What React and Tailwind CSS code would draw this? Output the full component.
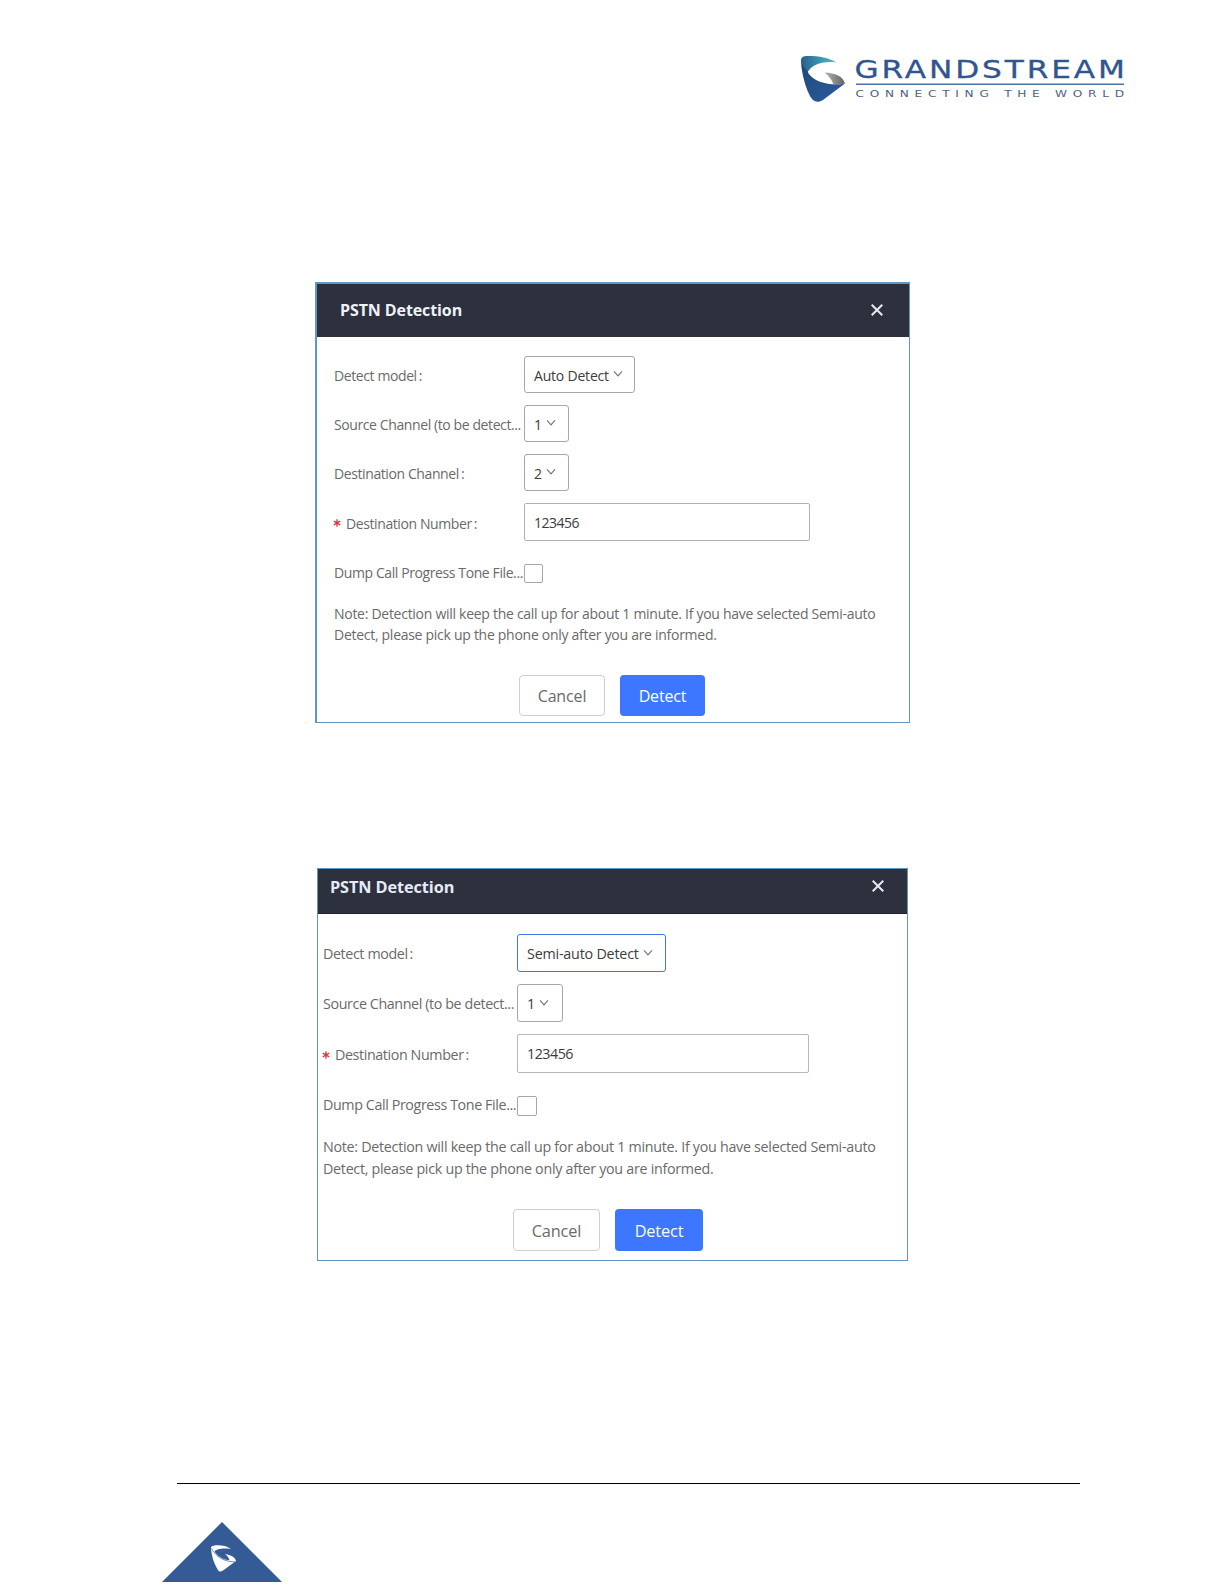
import clsx from 'clsx';

const Chevron = () => (
  <svg width="10" height="8" viewBox="0 0 10 8" fill="none" stroke="#777" strokeWidth="1.2" className="mb-px shrink-0">
    <path d="M1 1.4 L5 5.8 L9 1.4" />
  </svg>
);

const Close = () => (
  <svg width="12" height="12" viewBox="0 0 12 12" fill="none" stroke="#e6e9f2" strokeWidth="2">
    <path d="M0.7 0.7 L11.3 11.3 M11.3 0.7 L0.7 11.3" />
  </svg>
);

const Select = ({ value, className }) => (
  <button className={clsx('flex items-center rounded-[3px] border bg-white pl-[9px] tracking-[-0.2px] text-[#3c3c3c]', className)}>
    <span className="mt-px mr-1">{value}</span>
    <Chevron />
  </button>
);

const Row = ({ label, required, colon, className, labelClass, children }) => (
  <div className={clsx('flex items-center', className)}>
    <div className={clsx('flex shrink-0 items-center pt-[2px] tracking-[-0.4px] whitespace-nowrap text-[#6a6a6a]', labelClass)}>
      {required && (
        <svg width="8" height="8" viewBox="0 0 8 8" stroke="#d9363e" strokeWidth="1.3" className="mr-[5px] -ml-px">
          <path d="M4 0.3 V7.7 M0.8 2.1 L7.2 5.9 M7.2 2.1 L0.8 5.9" />
        </svg>
      )}
      <span>{label}</span>
      {colon && <span className="ml-[2px]">:</span>}
    </div>
    {children}
  </div>
);

const Note = ({ className }) => (
  <p className={clsx('whitespace-nowrap text-[#6a6a6a]', className)}>
    Note: Detection will keep the call up for about 1 minute. If you have selected Semi-auto
    <br />
    Detect, please pick up the phone only after you are informed.
  </p>
);

const AutoDialog = () => (
  <section className="mt-[180px] ml-[315px] h-[441px] w-[595px] border-t-2 border-r border-b border-l-2 border-[#6496c4] bg-white text-[14px]">
    <header className="flex h-[53px] items-center justify-between bg-[#2d313e] pr-[26px] pb-[2px] pl-[23px]">
      <h2 className="text-[16px] font-bold tracking-[-0.1px] text-[#eef0fa]">PSTN Detection</h2>
      <Close />
    </header>
    <div className="pt-[13px] pl-[17px]">
      <Row label="Detect model" colon className="h-[49px]" labelClass="w-[190px]">
        <Select value="Auto Detect" className="h-[37px] w-[111px] border-[#a6a6ac]" />
      </Row>
      <Row label="Source Channel (to be detect..." className="h-[49px]" labelClass="w-[190px]">
        <Select value="1" className="h-[37px] w-[45px] border-[#a6a6ac]" />
      </Row>
      <Row label="Destination Channel" colon className="h-[49px]" labelClass="w-[190px]">
        <Select value="2" className="h-[37px] w-[45px] border-[#a6a6ac]" />
      </Row>
      <Row label="Destination Number" required colon className="h-[50px]" labelClass="w-[190px]">
        <div className="flex h-[38px] w-[286px] items-center rounded-[2px] border border-[#b0b0b6] pl-[9px] tracking-[-0.5px] text-[#3c3c3c]">123456</div>
      </Row>
      <Row label="Dump Call Progress Tone File..." className="h-[49px]" labelClass="w-[190px]">
        <div className="mt-[4px] h-[19px] w-[19px] rounded-[2px] border border-[#a6a6ac]" />
      </Row>
      <Note className="mt-[7px] leading-[21.4px] tracking-[-0.28px]" />
    </div>
    <div className="mt-[29px] ml-[202px] flex gap-[15px] text-[16px] tracking-[-0.15px]">
      <button className="h-[41px] w-[86px] rounded-[4px] border border-[#cfcfd2] pt-[2px] text-[#6a6a6a]">Cancel</button>
      <button className="h-[41px] w-[85px] rounded-[4px] bg-[#3d77ff] pt-[2px] text-white">Detect</button>
    </div>
  </section>
);

const SemiAutoDialog = () => (
  <section className="mt-[145px] ml-[317px] h-[393px] w-[591px] border border-[#6496c4] bg-white text-[14.3px]">
    <header className="flex h-[45px] items-start justify-between border-b border-[#1e2230] bg-[#2d313e] pr-[23px] pl-[12px]">
      <h2 className="mt-[6px] text-[16.3px] leading-6 font-bold tracking-[-0.1px] text-[#e6eaf8]">PSTN Detection</h2>
      <div className="mt-[11px]">
        <Close />
      </div>
    </header>
    <div className="pt-[14px] pl-[5px]">
      <Row label="Detect model" colon className="h-[50px]" labelClass="w-[194px]">
        <Select value="Semi-auto Detect" className="h-[38px] w-[149px] border-[#4a74d8]" />
      </Row>
      <Row label="Source Channel (to be detect..." className="h-[50px]" labelClass="w-[194px]">
        <Select value="1" className="h-[38px] w-[46px] border-[#a6a6ac]" />
      </Row>
      <Row label="Destination Number" required colon className="h-[51px]" labelClass="w-[194px]">
        <div className="flex h-[39px] w-[292px] items-center rounded-[2px] border border-[#b8b8ba] pl-[9px] tracking-[-0.5px] text-[#3c3c3c]">123456</div>
      </Row>
      <Row label="Dump Call Progress Tone File..." className="h-[50px]" labelClass="w-[194px]">
        <div className="mt-[4px] h-[20px] w-[20px] rounded-[2px] border border-[#a6a6ac]" />
      </Row>
      <Note className="mt-[7px] leading-[21.6px] tracking-[-0.29px]" />
    </div>
    <div className="mt-[30px] ml-[195px] flex gap-[15px] text-[16.3px] tracking-[-0.15px]">
      <button className="h-[42px] w-[87px] rounded-[4px] border border-[#cfcfd2] pt-[2px] text-[#6a6a6a]">Cancel</button>
      <button className="h-[42px] w-[88px] rounded-[4px] bg-[#3d77ff] pt-[2px] text-white">Detect</button>
    </div>
  </section>
);

const Logo = () => (
  <svg width="326" height="50" viewBox="800 54 326 50">
    <defs>
      <linearGradient id="teal" x1="0" x2="1">
        <stop offset="0" stopColor="#2a5f8c" />
        <stop offset="0.6" stopColor="#3b9bb4" />
        <stop offset="1" stopColor="#62b7c6" />
      </linearGradient>
      <linearGradient id="navy" x1="0" y1="0" x2="1" y2="1">
        <stop offset="0" stopColor="#1d4876" />
        <stop offset="1" stopColor="#2b5da0" />
      </linearGradient>
      <linearGradient id="steel" x1="0" x2="1">
        <stop offset="0" stopColor="#b5b5b5" />
        <stop offset="1" stopColor="#5f6165" />
      </linearGradient>
    </defs>
    <path d="M801 59 C801 74 807 92 812 99 C815 102.500 819 102.500 823 100 L845 83.500 C832 86 815 83 808.500 73.500 C807 70 808 67.500 809.500 66 Z" fill="url(#navy)" />
    <path d="M801 61 C801 57 803 56 808 56 C819 56 829 57.500 836.500 62.500 C824 61 813 64 808.500 71 C805 69 802 65 801 61 Z" fill="url(#teal)" />
    <path d="M824.500 72.500 C835 73 843 76 845 83.500 C841 84.500 837 85 833.500 84.500 C832 80 829 76 824.500 72.500 Z" fill="url(#steel)" />
    <g transform="translate(854.500 77.500) scale(1.3 1)">
      <text textLength="208" lengthAdjust="spacing" fontSize="24" fill="#31568f" stroke="#31568f" strokeWidth="0.3" fontFamily="DejaVu Sans, sans-serif">
        GRANDSTREAM
      </text>
    </g>
    <rect x="856" y="83.500" width="268" height="1.500" fill="#4a72a6" />
    <g transform="translate(855.500 97.300) scale(1.35 1)">
      <text textLength="199" lengthAdjust="spacing" fontSize="9" fill="#4d5f85" fontFamily="DejaVu Sans, sans-serif">
        CONNECTING THE WORLD
      </text>
    </g>
  </svg>
);

const FooterMark = () => (
  <svg width="120" height="60" viewBox="0 0 120 60">
    <path d="M60 0 L120 60 H0 Z" fill="#345b95" />
    <path d="M49 25 C51 22.500 63 22.500 69 27 C61 26 54 27 52.500 29.500 C56 35 62 38 67.500 38.300 C67 36 65 33.500 63 32 C69 33 73.500 35.500 74 39 L61 48.500 C59 50 57 50 56 48 C52 42 49 32 49 25 Z" fill="white" />
    <path d="M49.500 26.500 C54 35 62 39.500 73 40" fill="none" stroke="#345b95" strokeWidth="0.7" />
  </svg>
);

const App = () => (
  <main className="flex h-[1584px] w-[1224px] flex-col overflow-hidden bg-white font-['Open_Sans',sans-serif]">
    <div className="mt-[52px] ml-[800px] h-[50px]">
      <div className="mt-[2px]">
        <Logo />
      </div>
    </div>
    <AutoDialog />
    <SemiAutoDialog />
    <div className="mt-[222px] ml-[177px] h-px w-[903px] shrink-0 bg-black" />
    <div className="mt-[38px] ml-[162px]">
      <FooterMark />
    </div>
  </main>
);

export default App;
